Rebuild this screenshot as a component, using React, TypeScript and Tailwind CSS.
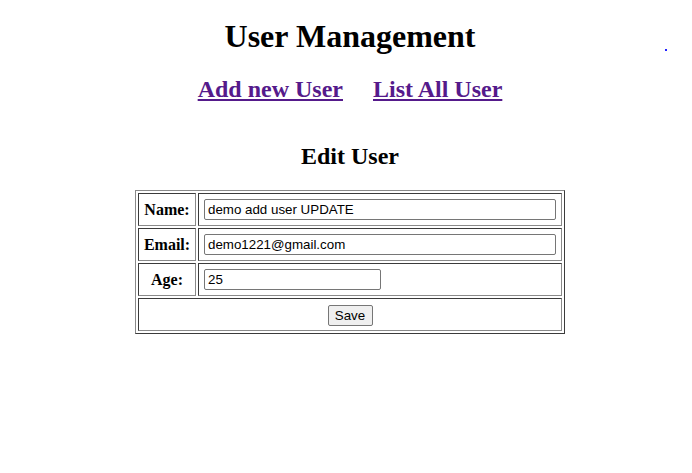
export default function App() {
  const users = [
    { label: "Name:", value: "demo add user UPDATE", width: "w-[352px]" },
    { label: "Email:", value: "demo1221@gmail.com", width: "w-[352px]" },
    { label: "Age:", value: "25", width: "w-[177px]" },
  ]

  return (
    <div className="relative min-h-screen bg-white pl-[8px] font-['Liberation_Serif',serif] text-black">
      <h1 className="pt-[18px] text-center text-[32px] font-bold leading-[37px]">User Management</h1>
      <h2 className="mt-[20px] flex justify-center gap-[30px] text-[24px] font-bold leading-[28px]">
        <a href="#" className="text-[#551a8b] underline">Add new User</a>
        <a href="#" className="text-[#551a8b] underline">List All User</a>
      </h2>
      <h3 className="mt-[39px] text-center text-[24px] font-bold leading-[28px]">Edit User</h3>

      <table className="mx-auto mt-[20px] w-[430px] border-separate border-spacing-[2px] border border-t-[#8a8a8a] border-l-[#8a8a8a] border-r-[#3c3c3c] border-b-[#3c3c3c]">
        <tbody>
          {users.map((u) => (
            <tr key={u.label} className="h-[33px]">
              <th className="w-[58px] border border-t-[#3c3c3c] border-l-[#3c3c3c] border-r-[#8a8a8a] border-b-[#8a8a8a] p-0 text-center text-[16px] font-bold">
                {u.label}
              </th>
              <td className="border border-t-[#3c3c3c] border-l-[#3c3c3c] border-r-[#8a8a8a] border-b-[#8a8a8a] p-0 pl-[5px] align-middle">
                <input
                  defaultValue={u.value}
                  className={`${u.width} block h-[21px] rounded-[2px] border border-[#767676] pl-[3px] font-['Liberation_Sans',Arial,sans-serif] text-[13.33px] text-black outline-none`}
                />
              </td>
            </tr>
          ))}
          <tr className="h-[33px]">
            <td colSpan={2} className="border border-t-[#3c3c3c] border-l-[#3c3c3c] border-r-[#8a8a8a] border-b-[#8a8a8a] p-0 text-center align-middle">
              <button className="h-[21px] w-[45px] rounded-[2px] border border-[#767676] bg-[#efefef] p-0 font-['Liberation_Sans',Arial,sans-serif] text-[13.33px] leading-none text-black">
                Save
              </button>
            </td>
          </tr>
        </tbody>
      </table>

      <span className="absolute left-[665px] top-[49px] h-[2px] w-[2px] bg-[#2323ff]" />
    </div>
  )
}
